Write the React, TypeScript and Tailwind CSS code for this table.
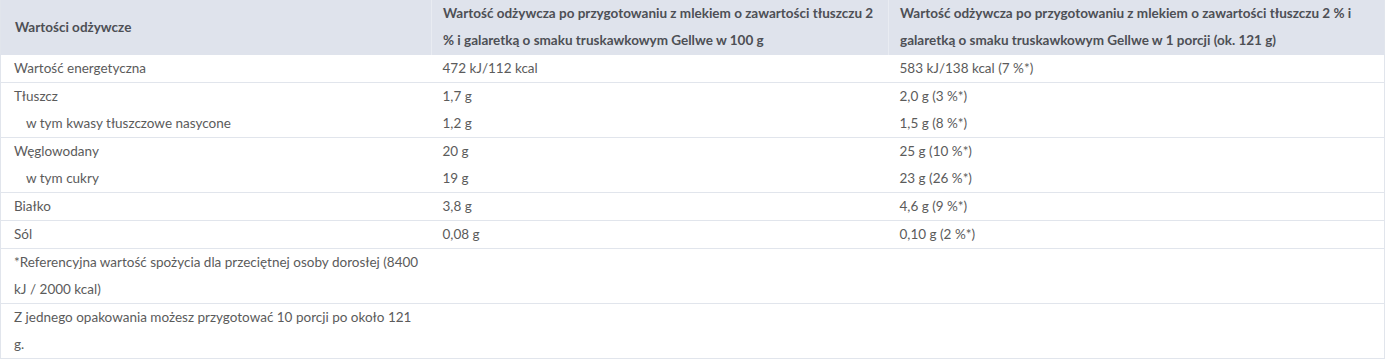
import React from "react";

type Row = { label: string; a: string; b: string; indent?: boolean };
type Group = Row[];

const groups: Group[] = [
  [{ label: "Wartość energetyczna", a: "472 kJ/112 kcal", b: "583 kJ/138 kcal (7 %*)" }],
  [
    { label: "Tłuszcz", a: "1,7 g", b: "2,0 g (3 %*)" },
    { label: "w tym kwasy tłuszczowe nasycone", a: "1,2 g", b: "1,5 g (8 %*)", indent: true },
  ],
  [
    { label: "Węglowodany", a: "20 g", b: "25 g (10 %*)" },
    { label: "w tym cukry", a: "19 g", b: "23 g (26 %*)", indent: true },
  ],
  [{ label: "Białko", a: "3,8 g", b: "4,6 g (9 %*)" }],
  [{ label: "Sól", a: "0,08 g", b: "0,10 g (2 %*)" }],
];

export default function App() {
  return (
    <div className="w-[1385px] bg-white" style={{ fontFamily: "Lato, 'Open Sans', sans-serif" }}>
      <table className="w-[1384px] table-fixed border-collapse text-[13.5px] leading-[27px] text-[#5b5b5b] border-x border-[#e1e5ec]">
        <colgroup>
          <col className="w-[431px]" />
          <col className="w-[457px]" />
          <col className="w-[496px]" />
        </colgroup>
        <thead>
          <tr className="bg-[#dfe3ec] text-[#4d4f55] font-bold border-b border-[#dfe3ec]">
            <th className="text-left font-bold pl-[14px] pr-[11px] align-middle border-r border-[#e9ecf2]">Wartości odżywcze</th>
            <th className="text-left font-bold pl-[11px] pr-[10px] border-r border-[#e9ecf2]">
              Wartość odżywcza po przygotowaniu z mlekiem o zawartości tłuszczu 2 % i galaretką o smaku truskawkowym Gellwe w 100 g
            </th>
            <th className="text-left font-bold pl-[11px] pr-[10px]">
              Wartość odżywcza po przygotowaniu z mlekiem o zawartości tłuszczu 2 % i galaretką o smaku truskawkowym Gellwe w 1 porcji (ok. 121 g)
            </th>
          </tr>
        </thead>
        {groups.map((g, gi) => (
          <tbody key={gi} className="border-b border-[#e1e5ec]">
            {g.map((r, ri) => (
              <tr key={ri}>
                <td className={r.indent ? "pl-[25px] pr-[11px]" : "pl-[13px] pr-[11px]"}>{r.label}</td>
                <td className="pl-[11px] pr-[10px]">{r.a}</td>
                <td className="pl-[11px] pr-[10px]">{r.b}</td>
              </tr>
            ))}
          </tbody>
        ))}
        <tbody className="border-b border-[#e1e5ec]">
          <tr>
            <td className="pl-[13px] pr-[11px]">*Referencyjna wartość spożycia dla przeciętnej osoby dorosłej (8400 kJ / 2000 kcal)</td>
            <td></td>
            <td></td>
          </tr>
        </tbody>
        <tbody className="border-b border-[#e1e5ec]">
          <tr>
            <td className="pl-[13px] pr-[11px]">Z jednego opakowania możesz przygotować 10 porcji po około 121 g.</td>
            <td></td>
            <td></td>
          </tr>
        </tbody>
      </table>
    </div>
  );
}
